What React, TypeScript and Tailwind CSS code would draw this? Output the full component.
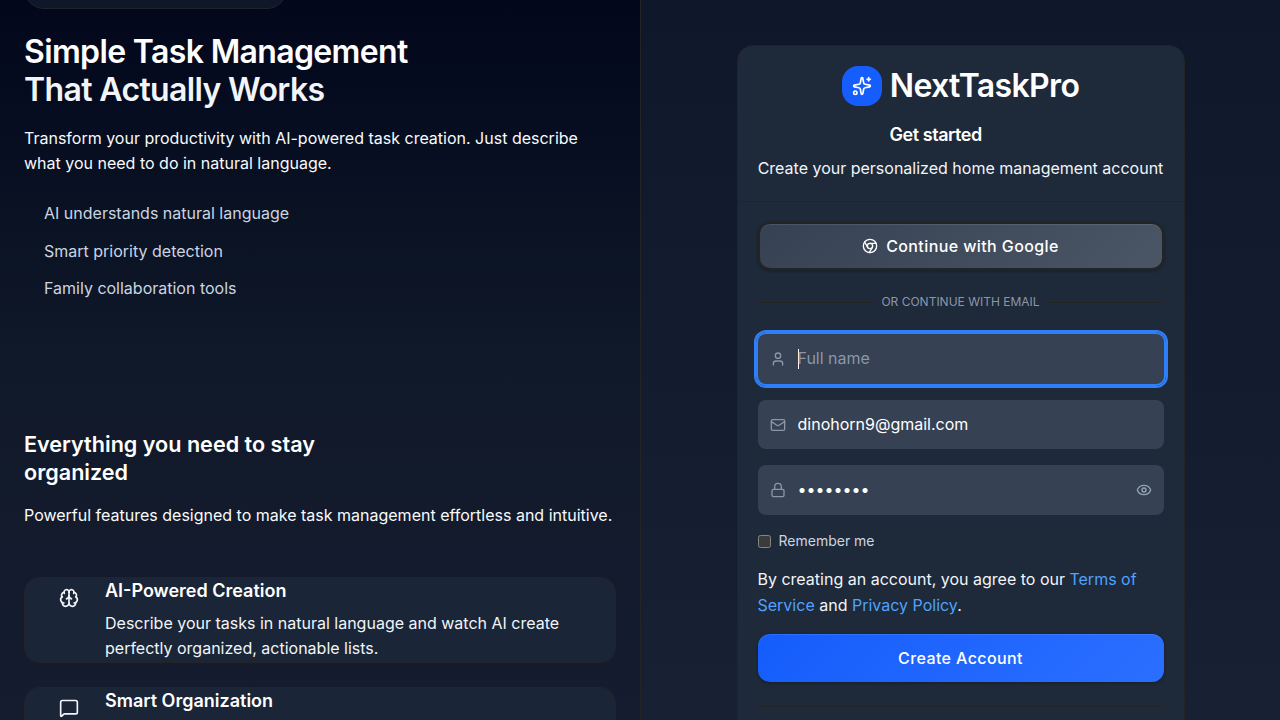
import type { ReactNode } from "react";
import { Brain, Chrome, Eye, Lock, Mail, MessageSquare, Sparkles, User } from "lucide-react";

const highlights = ["AI understands natural language", "Smart priority detection", "Family collaboration tools"];

function Feature({ icon, title, lines }: { icon: ReactNode; title: string; lines: string[] }) {
  return (
    <article className="flex h-[86px] shrink-0 overflow-hidden rounded-2xl border border-[#242424] bg-[#1a2537] pl-[34px] text-white">
      <div className="w-[46px] shrink-0 pt-[10px] text-[#f1f5f9]">{icon}</div>
      <div className="whitespace-nowrap">
        <h3 className="h-[33px] text-[18px] leading-[25px] font-semibold">{title}</h3>
        {lines.map((line) => (
          <p key={line} className="text-base leading-[25px] text-[#f1f5f9]">{line}</p>
        ))}
      </div>
    </article>
  );
}

function Marketing() {
  return (
    <section className="flex h-full w-[641px] shrink-0 flex-col overflow-hidden border-r border-[#242424] bg-linear-to-b from-[#03071b] via-[#101929] to-[#151c30] px-6 whitespace-nowrap">
      <div className="-mt-[31px] h-10 w-[263px] shrink-0 rounded-full border border-[#242424] bg-[#0f182a]" />
      <h1 className="mt-6 shrink-0 text-[32px] leading-[38.4px] font-semibold tracking-[-0.64px] text-white">
        Simple Task Management
        <br />
        <span className="text-[#f1f5f9]">That Actually Works</span>
      </h1>
      <p className="mt-4 shrink-0 text-base leading-[25px] text-[#f8fafc]">
        Transform your productivity with AI-powered task creation. Just describe
        <br />
        what you need to do in natural language.
      </p>
      <ul className="mt-[25.2px] flex shrink-0 flex-col gap-[12.5px] pl-5 text-base leading-[25px] text-[#cbd5e1]">
        {highlights.map((item) => (
          <li key={item}>{item}</li>
        ))}
      </ul>
      <h2 className="mt-[128.8px] shrink-0 text-[21.6px] leading-[28px] font-semibold text-white">
        Everything you need to stay
        <br />
        organized
      </h2>
      <p className="mt-[17px] shrink-0 text-base leading-[25px] text-[#f8fafc]">
        Powerful features designed to make task management effortless and intuitive.
      </p>
      <div className="mt-[49px] flex shrink-0 flex-col gap-6">
        <Feature
          icon={<Brain size={20} />}
          title="AI-Powered Creation"
          lines={["Describe your tasks in natural language and watch AI create", "perfectly organized, actionable lists."]}
        />
        <Feature icon={<MessageSquare size={20} />} title="Smart Organization" lines={[]} />
      </div>
    </section>
  );
}

function Field({ icon, children, className }: { icon: ReactNode; children: ReactNode; className: string }) {
  return (
    <div className={"flex shrink-0 items-center rounded-lg bg-[#364153] px-3 text-base " + className}>
      <span className="mr-3 text-[#8b97a8]">{icon}</span>
      {children}
    </div>
  );
}

function SignUp() {
  return (
    <section className="flex h-full min-w-0 flex-1 justify-center overflow-hidden bg-linear-to-b from-[#0f172a] to-[#182133] pt-[45px]">
      <div className="flex h-[760px] w-[448px] flex-col rounded-2xl border border-[#242424] bg-[#1e2939] whitespace-nowrap text-white">
        <header className="flex h-[156px] shrink-0 flex-col items-center border-b border-[#242424] pt-5">
          <div className="flex items-center gap-2">
            <div className="flex size-10 items-center justify-center rounded-2xl bg-[#155dfc]">
              <Sparkles size={20} />
            </div>
            <h1 className="text-[32px] leading-10 font-semibold tracking-[-0.64px]">NextTaskPro</h1>
          </div>
          <h2 className="mt-4 w-[142px] text-[18px] leading-[26px] font-semibold tracking-[-0.45px]">Get started</h2>
          <p className="mt-2 text-base leading-[25px] text-[#f1f5f9]">Create your personalized home management account</p>
        </header>
        <div className="flex flex-col px-5 pt-5">
          <button className="flex h-12 w-[406px] items-center justify-center gap-2 rounded-xl border-2 border-[#242424] bg-linear-[135deg,#364153,#4a5565] bg-origin-border text-base font-medium tracking-[0.4px] shadow-[inset_0_1px_0_rgba(255,255,255,0.1),0_1px_3px_rgba(0,0,0,0.3)]">
            <Chrome size={16} />
            Continue with Google
          </button>
          <div className="mt-[23px] flex h-[18px] items-center gap-2 text-xs text-[#8b97a8]">
            <span className="h-px flex-1 bg-[#242424]" />
            <span>OR CONTINUE WITH EMAIL</span>
            <span className="h-px flex-1 bg-[#242424]" />
          </div>
          <Field
            icon={<User size={16} />}
            className="mt-[23px] h-[50px] ring-2 ring-[#2f7ff9] outline-2 outline-offset-2 outline-[#2f7ff9]"
          >
            <span className="h-5 w-px bg-white" />
            <span className="-ml-px pb-0.5 text-[#8b97a8]">Full name</span>
          </Field>
          <Field icon={<Mail size={16} />} className="mt-4 h-[49px]">
            <span className="pb-px">dinohorn9@gmail.com</span>
          </Field>
          <Field icon={<Lock size={16} />} className="mt-4 h-[50px]">
            <span className="pb-[3px]">••••••••</span>
            <Eye size={16} className="ml-auto text-[#94a3b8]" />
          </Field>
          <label className="mt-4 flex h-5 items-center gap-2 text-sm text-[#cbd5e1]">
            <span className="size-[13px] rounded-[2.5px] border border-[#858585] bg-[#3b3b3b]" />
            Remember me
          </label>
          <p className="mt-[15px] text-base leading-[26px] text-[#f1f5f9]">
            By creating an account, you agree to our <a className="text-[#51a2ff]">Terms of</a>
            <br />
            <a className="text-[#51a2ff]">Service</a> and <a className="text-[#51a2ff]">Privacy Policy</a>.
          </p>
          <button className="mt-4 h-12 shrink-0 rounded-xl bg-linear-[135deg,#155dfc,#2b6fff] text-base font-medium tracking-[0.4px] shadow-[inset_0_1px_0_rgba(255,255,255,0.1),0_1px_3px_rgba(0,0,0,0.3)]">
            Create Account
          </button>
          <div className="mt-6 h-px shrink-0 bg-[#242424]" />
        </div>
      </div>
    </section>
  );
}

export default function App() {
  return (
    <main className="flex h-[720px] w-[1280px] overflow-hidden bg-[#0f172a] font-['Inter',sans-serif]">
      <Marketing />
      <SignUp />
    </main>
  );
}
